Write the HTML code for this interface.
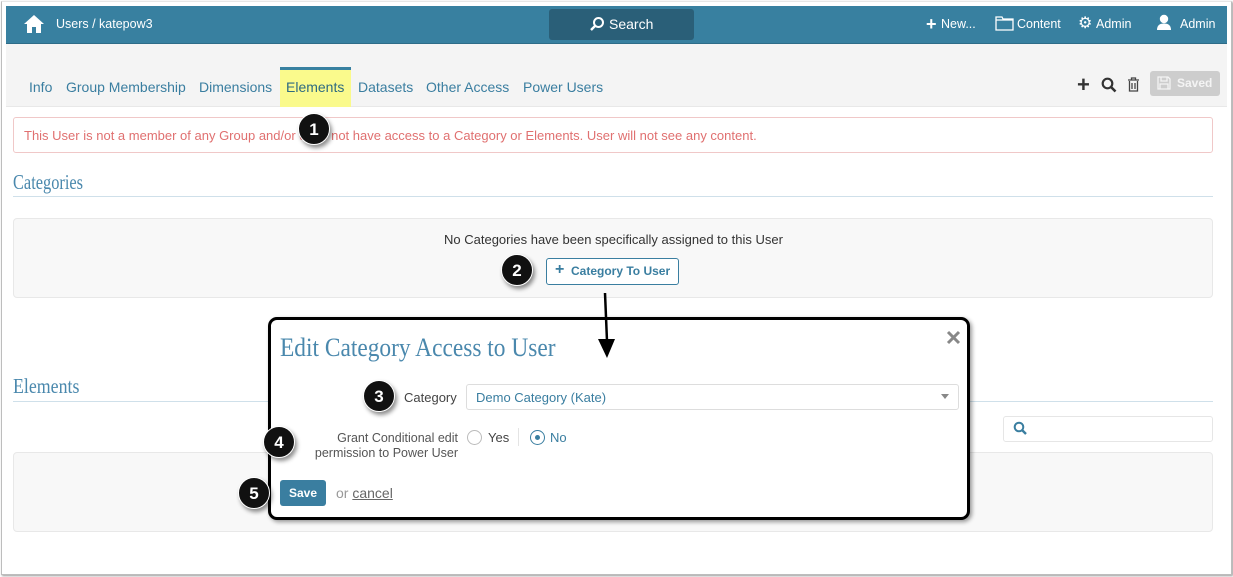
<!DOCTYPE html>
<html><head><meta charset="utf-8"><style>
*{box-sizing:border-box;margin:0;padding:0}
body{width:1233px;height:577px;background:#fff;font-family:"Liberation Sans",sans-serif;position:relative;overflow:hidden}
.a{position:absolute}
.frame{left:1px;top:1px;width:1231px;height:574px;border:1px solid #bdbdbd;border-top-color:#e6e6e6;box-shadow:1px 1px 2px #999}
.top{left:6px;top:6px;width:1221px;height:38px;background:#3880a0;border-bottom:1px solid #2e6c88;color:#fff;font-size:12.5px}
.nav{left:6px;top:44px;width:1221px;height:63px;background:#f4f4f4;border-bottom:1px solid #e8e8e8}
.tab{top:79px;font-size:14px;color:#3a7ea0}
.serif{font-family:"Liberation Serif",serif;color:#4a88ad;transform-origin:left top;white-space:nowrap}
.badge{width:32px;height:32px;border-radius:50%;background:#111;color:#fff;font-weight:bold;font-size:17px;text-align:center;line-height:32px;box-shadow:2px 3px 4px rgba(0,0,0,.45);border:1.5px solid #fff}
.panel{background:#f8f8f8;border:1px solid #e8e8e8;border-radius:4px}
</style></head><body>
<div class="a frame"></div>
<div class="a top">
 <svg class="a" style="left:17px;top:8px" width="22" height="20" viewBox="0 0 22 20"><path d="M11 1 L1 10 H4 V19 H9 V13 H13 V19 H18 V10 H21 Z" fill="#fff"/></svg>
 <div class="a" style="left:50px;top:11px">Users / katepow3</div>
 <div class="a" style="left:543px;top:3px;width:145px;height:31px;background:#2a5f78;border-radius:3px;font-size:14px;line-height:31px;padding-left:60px">Search</div>
 <svg class="a" style="left:583px;top:10px" width="16" height="16" viewBox="0 0 16 16"><circle cx="9.5" cy="6.5" r="4.5" fill="none" stroke="#fff" stroke-width="2"/><path d="M6.3 9.7 L2 14" stroke="#fff" stroke-width="2.4"/></svg>
 <div class="a" style="left:920px;top:8px;font-size:18px;font-weight:bold">+</div>
 <div class="a" style="left:935px;top:11px">New...</div>
 <svg class="a" style="left:989px;top:9px" width="19" height="16" viewBox="0 0 19 16"><path d="M1 2 H7 L8 4 H18 V15 H1 Z M1 5 H18" fill="none" stroke="#fff" stroke-width="1.3"/></svg>
 <div class="a" style="left:1011px;top:11px">Content</div>
 <div class="a" style="left:1072px;top:7px;font-size:16px">⚙</div>
 <div class="a" style="left:1090px;top:11px">Admin</div>
 <svg class="a" style="left:1150px;top:8px" width="16" height="17" viewBox="0 0 16 17"><circle cx="8" cy="5" r="4.2" fill="#fff"/><path d="M1 16 Q1 9.5 8 9.5 Q15 9.5 15 16 Z" fill="#fff"/></svg>
 <div class="a" style="left:1174px;top:11px">Admin</div>
</div>
<div class="a nav"></div>
<div class="a" style="left:280px;top:67px;width:71px;height:40px;background:#fafa8c;border-top:3px solid #3880a0"></div>
<div class="a tab" style="left:29px">Info</div>
<div class="a tab" style="left:66px">Group Membership</div>
<div class="a tab" style="left:199px">Dimensions</div>
<div class="a tab" style="left:286px;color:#2e6a80">Elements</div>
<div class="a tab" style="left:358px">Datasets</div>
<div class="a tab" style="left:426px">Other Access</div>
<div class="a tab" style="left:523px">Power Users</div>
<div class="a" style="left:1077px;top:72px;font-size:22px;font-weight:bold;color:#333">+</div>
<svg class="a" style="left:1101px;top:77px" width="16" height="16" viewBox="0 0 16 16"><circle cx="6.5" cy="6.5" r="4.8" fill="none" stroke="#333" stroke-width="2.2"/><path d="M10 10 L14.5 14.5" stroke="#333" stroke-width="2.6"/></svg>
<svg class="a" style="left:1127px;top:77px" width="13" height="15" viewBox="0 0 13 15"><path d="M1 3 H12 M4.5 3 V1 H8.5 V3 M2.5 4 V14 H10.5 V4 M5 6 V12 M8 6 V12" fill="none" stroke="#444" stroke-width="1.3"/></svg>
<div class="a" style="left:1150px;top:71px;width:70px;height:25px;background:#cdcdcd;border-radius:3px;color:#f4f4f4;font-weight:bold;font-size:12px;line-height:25px;padding-left:27px">Saved</div>
<svg class="a" style="left:1157px;top:76px" width="14" height="14" viewBox="0 0 14 14"><path d="M1 1 H11 L13 3 V13 H1 Z M4 1 V5 H10 V1 M3 13 V8 H11 V13" fill="none" stroke="#f4f4f4" stroke-width="1.3"/></svg>

<div class="a" style="left:13px;top:117px;width:1200px;height:36px;border:1px solid #f0c8c8;border-radius:3px;color:#e07070;font-size:13px;padding:10px 0 0 10px">This User is not a member of any Group and/or does not have access to a Category or Elements. User will not see any content.</div>
<div class="a badge" style="left:298px;top:113px">1</div>

<div class="a serif" style="left:13px;top:170px;font-size:21px;transform:scaleX(0.78)">Categories</div>
<div class="a" style="left:13px;top:196px;width:1200px;height:1px;background:#cfe0ea"></div>
<div class="a panel" style="left:13px;top:218px;width:1200px;height:80px"></div>
<div class="a" style="left:444px;top:232px;font-size:13px;color:#333">No Categories have been specifically assigned to this User</div>
<div class="a" style="left:546px;top:258px;width:133px;height:27px;border:1px solid #3a7ea0;border-radius:3px;background:#fff;color:#3a7ea0;font-weight:bold;font-size:12px;line-height:25px;padding-left:24px">Category To User</div>
<div class="a" style="left:555px;top:261px;color:#3a7ea0;font-weight:bold;font-size:16px">+</div>
<div class="a badge" style="left:501px;top:254px">2</div>

<div class="a serif" style="left:13px;top:374px;font-size:21px;transform:scaleX(0.85)">Elements</div>
<div class="a" style="left:13px;top:401px;width:1200px;height:1px;background:#cfe0ea"></div>
<div class="a" style="left:1003px;top:416px;width:210px;height:26px;border:1px solid #e6e6e6;border-radius:3px;background:#fff"></div>
<svg class="a" style="left:1013px;top:421px" width="15" height="15" viewBox="0 0 15 15"><circle cx="6" cy="6" r="4.3" fill="none" stroke="#3a7ea0" stroke-width="2"/><path d="M9 9 L13 13" stroke="#3a7ea0" stroke-width="2.4"/></svg>
<div class="a panel" style="left:13px;top:452px;width:1200px;height:80px"></div>

<div class="a" style="left:268px;top:317px;width:702px;height:203px;border:3px solid #000;border-radius:9px;background:#fff;box-shadow:2px 2px 4px rgba(0,0,0,.4)"></div>
<svg class="a" style="left:595px;top:293px" width="24" height="67" viewBox="0 0 24 67"><path d="M10 0 L12 48" stroke="#000" stroke-width="2.5"/><path d="M3 46 L12 65 L20 46 Z" fill="#000"/></svg>
<div class="a serif" style="left:280px;top:333px;font-size:26px;color:#4a88ad;transform:scaleX(0.9)">Edit Category Access to User</div>
<svg class="a" style="left:946px;top:330px" width="15" height="15" viewBox="0 0 15 15"><path d="M2 2 L13 13 M13 2 L2 13" stroke="#888" stroke-width="3"/></svg>
<div class="a" style="left:404px;top:390px;font-size:13px;color:#444">Category</div>
<div class="a" style="left:466px;top:384px;width:493px;height:26px;border:1px solid #ddd;border-radius:3px;color:#3a7ea0;font-size:13px;padding:5px 0 0 9px">Demo Category (Kate)</div>
<div class="a" style="left:941px;top:394px;width:0;height:0;border-left:4px solid transparent;border-right:4px solid transparent;border-top:5px solid #888"></div>
<div class="a" style="left:290px;top:431px;width:168px;text-align:right;font-size:12.5px;color:#555;line-height:15px">Grant Conditional edit<br>permission to Power User</div>
<div class="a" style="left:467px;top:430px;width:15px;height:15px;border:1px solid #bbb;border-radius:50%"></div>
<div class="a" style="left:488px;top:430px;font-size:13px;color:#444">Yes</div>
<div class="a" style="left:518px;top:428px;width:1px;height:18px;background:#e4e4e4"></div>
<div class="a" style="left:530px;top:430px;width:15px;height:15px;border:1.5px solid #3a7ea0;border-radius:50%"></div>
<div class="a" style="left:535px;top:435px;width:5px;height:5px;background:#3a7ea0;border-radius:50%"></div>
<div class="a" style="left:550px;top:430px;font-size:13px;color:#3a7ea0">No</div>
<div class="a" style="left:280px;top:480px;width:46px;height:26px;background:#3a7ea0;border-radius:3px;color:#fff;font-weight:bold;font-size:12px;text-align:center;line-height:26px">Save</div>
<div class="a" style="left:336px;top:485px;font-size:14px;color:#999">or <span style="color:#666;text-decoration:underline">cancel</span></div>
<div class="a badge" style="left:363px;top:380px">3</div>
<div class="a badge" style="left:263px;top:426px">4</div>
<div class="a badge" style="left:238px;top:477px">5</div>
</body></html>
